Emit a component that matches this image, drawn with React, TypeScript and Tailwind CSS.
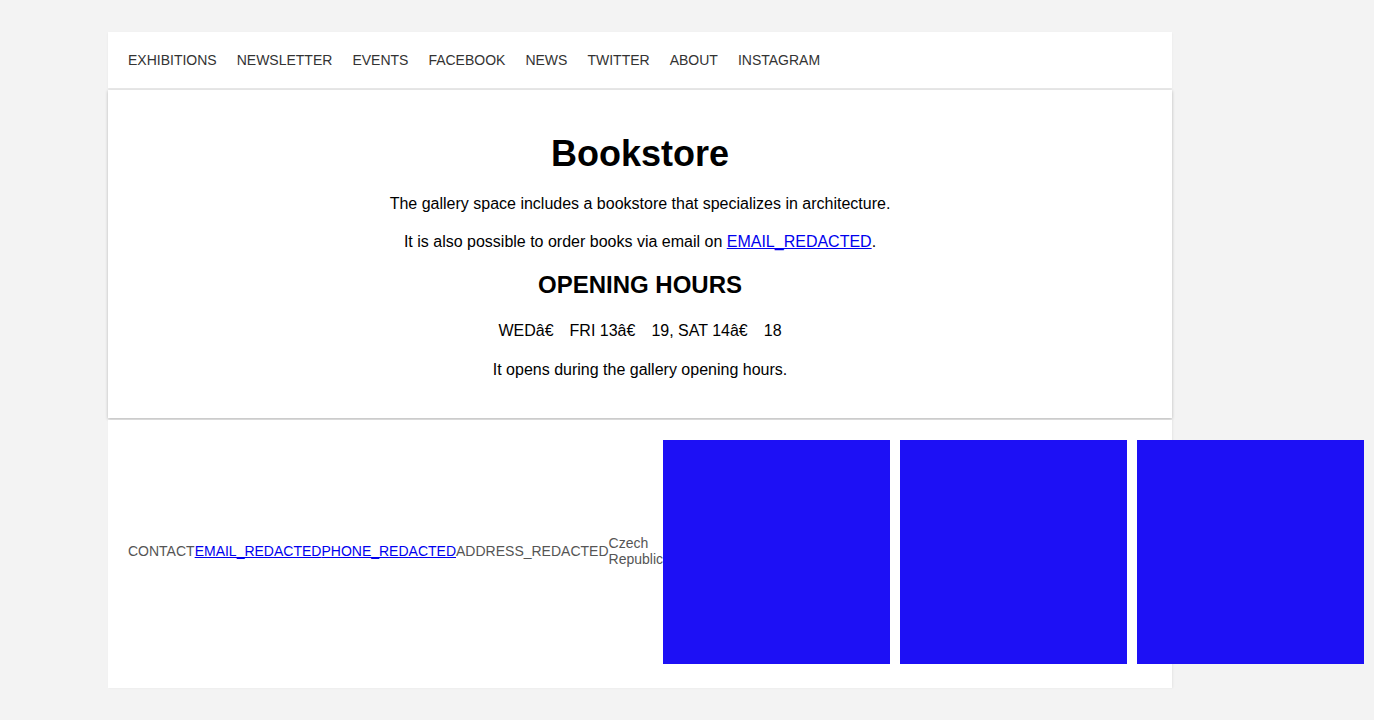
import React from "react";

const navItems = ["EXHIBITIONS", "NEWSLETTER", "EVENTS", "FACEBOOK", "NEWS", "TWITTER", "ABOUT", "INSTAGRAM"];

function Gap() {
  return <span className="inline-block w-[16px]"></span>;
}

export default function App() {
  return (
    <div className="min-h-[720px] bg-[#f3f3f3] pt-8 pl-[108px] overflow-hidden" style={{ fontFamily: '"Liberation Sans", Arial, sans-serif' }}>
      <div className="w-[1064px] flex flex-col">
        <nav className="bg-white h-14 px-5 flex items-center gap-5 text-[14px] leading-4 text-[#333] shadow-[0_1px_2px_rgba(0,0,0,0.06)]">
          {navItems.map((n) => (
            <span key={n}>{n}</span>
          ))}
        </nav>
        <main className="mt-[2px] bg-white h-[328px] pt-[41px] flex flex-col items-center text-black text-[16px] shadow-[0_1px_3px_rgba(0,0,0,0.25)]">
          <h1 className="text-[36px] leading-[46px] font-bold mb-[16px]">Bookstore</h1>
          <p className="leading-[22px] mb-4">The gallery space includes a bookstore that specializes in architecture.</p>
          <p className="leading-[22px] mb-[18px]">
            It is also possible to order books via email on{" "}
            <a href="#" className="text-[#0000ee] underline">EMAIL_REDACTED</a>.
          </p>
          <h2 className="text-[24px] leading-[28px] font-bold mb-[21px]">OPENING HOURS</h2>
          <p className="leading-[22px] mb-[17px]">
            WEDâ€<Gap />FRI 13â€<Gap />19, SAT 14â€<Gap />18
          </p>
          <p className="leading-[22px]">It opens during the gallery opening hours.</p>
        </main>
        <footer className="mt-[2px] bg-white h-[268px] pl-5 pt-5 pb-6 flex items-start shadow-[1px_0_2px_rgba(0,0,0,0.06)]">
          <div className="h-[222px] flex items-center text-[14px] leading-4 text-[#555] shrink-0">
            <span>CONTACT</span>
            <a href="#" className="text-[#0000ee] underline">EMAIL_REDACTED</a>
            <a href="#" className="text-[#0000ee] underline">PHONE_REDACTED</a>
            <span>ADDRESS_REDACTED</span>
            <span className="w-[54px] whitespace-normal">Czech Republic</span>
          </div>
          <div className="flex gap-[10px] shrink-0">
            <div className="w-[227px] h-[224px] bg-[#1d10f5]"></div>
            <div className="w-[227px] h-[224px] bg-[#1d10f5]"></div>
            <div className="w-[227px] h-[224px] bg-[#1d10f5]"></div>
          </div>
        </footer>
      </div>
    </div>
  );
}
